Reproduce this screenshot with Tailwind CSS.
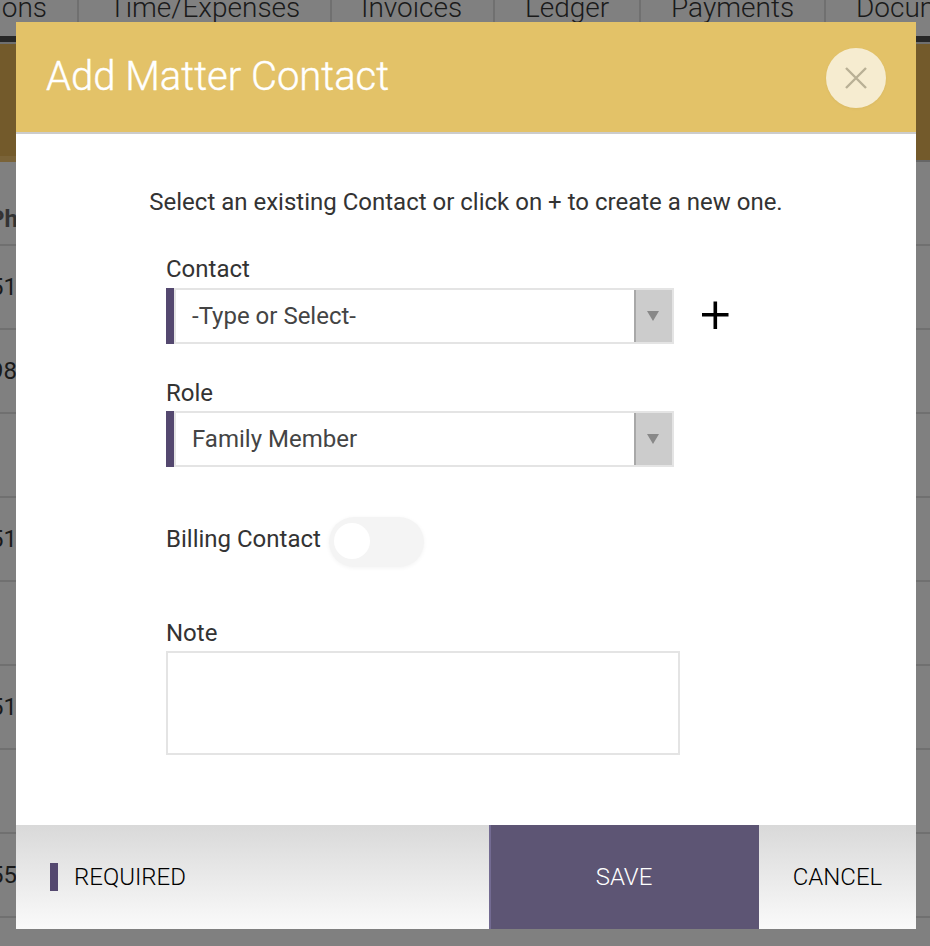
<!DOCTYPE html>
<html lang="en">
<head>
  <meta charset="UTF-8" />
  <meta name="viewport" content="width=device-width, initial-scale=1.0"/>
  <title>Add Matter Contact</title>
  <script src="https://cdn.jsdelivr.net/npm/@tailwindcss/browser@4"></script>
</head>
<body class="relative h-[946px] w-[930px] overflow-hidden bg-[#808080] font-['Roboto',sans-serif] text-2xl text-[#333]">

  <!-- Matter page, dimmed behind the dialog -->
  <div class="h-full overflow-hidden">
    <nav class="flex h-9 whitespace-nowrap text-[28px] leading-4 font-light text-[#1a1a1a]">
      <a class="flex w-[79px] shrink-0 justify-end border-r-2 border-[#707070] pr-[30px]">Transactions</a>
      <a class="w-[253px] shrink-0 border-r-2 border-[#707070] pl-[30px]">Time/Expenses</a>
      <a class="w-[163px] shrink-0 border-r-2 border-[#707070] pl-[29px]">Invoices</a>
      <a class="w-[146px] shrink-0 border-r-2 border-[#707070] pl-[30px]">Ledger</a>
      <a class="w-[185px] shrink-0 border-r-2 border-[#707070] pl-[30px]">Payments</a>
      <a class="shrink-0 pl-[30px]">Documents</a>
    </nav>
    <div class="h-1.5 bg-[#272727]"></div>
    <div class="flex h-[120px] border-t-2 border-[#6f6f6f]">
      <div class="w-1/2 border-b-6 border-[#7a6338] bg-[#735a2b]"></div>
      <div class="w-1/2 border-b-2 border-[#666] bg-[#735a2b]"></div>
    </div>
    <div class="leading-7 text-[#1a1a1a]">
      <div class="flex h-[84px] items-end border-b-2 border-[#707070] pb-[11px] font-bold text-[#333]"><span class="-ml-[11px]">Phone</span></div>
      <div class="flex h-[84px] items-center border-b-2 border-[#707070]"><span class="-ml-[10px]">51</span></div>
      <div class="flex h-[84px] items-center border-b-2 border-[#707070]"><span class="-ml-[10px]">98</span></div>
      <div class="h-[84px] border-b-2 border-[#707070]"></div>
      <div class="flex h-[84px] items-center border-b-2 border-[#707070]"><span class="-ml-[10px]">51</span></div>
      <div class="h-[84px] border-b-2 border-[#707070]"></div>
      <div class="flex h-[84px] items-center border-b-2 border-[#707070]"><span class="-ml-[10px]">51</span></div>
      <div class="h-[84px] border-b-2 border-[#707070]"></div>
      <div class="flex h-[84px] items-center border-b-2 border-[#707070]"><span class="-ml-[10px]">55</span></div>
    </div>
  </div>

  <!-- Dialog -->
  <div class="absolute top-[22px] left-4 flex h-[907px] w-[900px] flex-col bg-white">
    <header class="flex h-28 shrink-0 items-center justify-between border-b-2 border-[#ccc] bg-[#e3c268] px-[30px]">
      <h1 class="text-[40px] leading-[48px] font-light text-white [-webkit-text-stroke:0.4px]">Add Matter Contact</h1>
      <button class="mt-0.5 flex size-[60px] items-center justify-center rounded-full bg-[#f6ecd0] shadow-[0_1px_3px_rgba(0,0,0,0.04)]">
        <svg class="size-[22px]" viewBox="0 0 22 22" fill="none" stroke="#b9b095" stroke-width="2.4">
          <path d="M1 1L21 21M21 1L1 21"/>
        </svg>
      </button>
    </header>

    <main class="flex-1 pt-[54px] leading-7">
      <p class="text-center">Select an existing Contact or click on + to create a new one.</p>

      <div class="pl-[150px]">
        <label class="mt-[39px] block">Contact</label>
        <div class="mt-[5px] flex items-center">
          <div class="flex h-14 w-[508px] border-l-8 border-[#54486f]">
            <div class="flex flex-1 border-2 border-[#e4e4e4]">
              <div class="flex flex-1 items-center pl-4 text-[#444]">-Type or Select-</div>
              <div class="flex w-[38px] items-center justify-center border-l-2 border-[#a8a8a8] bg-[#ccc] pr-0.5">
                <svg class="h-2.5 w-3" viewBox="0 0 12 10" fill="#888"><path d="M0 0H12L6 10Z"/></svg>
              </div>
            </div>
          </div>
          <svg class="mb-0.5 ml-7 size-7" viewBox="0 0 28 28" fill="none" stroke="#000" stroke-width="3.6">
            <path d="M0 13.8H26.5M13.3 0.5V28"/>
          </svg>
        </div>

        <label class="mt-[35px] block">Role</label>
        <div class="mt-1 flex h-14 w-[508px] border-l-8 border-[#54486f]">
          <div class="flex flex-1 border-2 border-[#e4e4e4]">
            <div class="flex flex-1 items-center pl-4 text-[#444]">Family Member</div>
            <div class="flex w-[38px] items-center justify-center border-l-2 border-[#a8a8a8] bg-[#ccc] pr-0.5">
              <svg class="h-2.5 w-3" viewBox="0 0 12 10" fill="#888"><path d="M0 0H12L6 10Z"/></svg>
            </div>
          </div>
        </div>

        <div class="mt-[50px] flex">
          <span class="mt-2">Billing Contact</span>
          <div class="ml-2 flex h-[50px] w-[95px] items-center rounded-full bg-[#f4f4f4] pl-[5px] shadow-[0_1px_4px_rgba(0,0,0,0.05)]">
            <div class="mb-0.5 size-9 rounded-full bg-white"></div>
          </div>
        </div>

        <label class="mt-[52px] block">Note</label>
        <div class="mt-1 h-[104px] w-[514px] border-2 border-[#e4e4e4]"></div>
      </div>
    </main>

    <footer class="flex h-[104px] shrink-0 items-center bg-linear-to-b from-[#d9d9d9] to-[#fafafa] font-light text-black">
      <div class="flex w-[473px] items-center pl-[34px]">
        <span class="h-7 w-2 bg-[#54486f]"></span>
        <span class="pl-4">REQUIRED</span>
      </div>
      <button class="h-full w-[270px] border-l-2 border-[#736b92] bg-[#5d5574] pr-0.5 text-white">SAVE</button>
      <button class="h-full flex-1">CANCEL</button>
    </footer>
  </div>
</body>
</html>
